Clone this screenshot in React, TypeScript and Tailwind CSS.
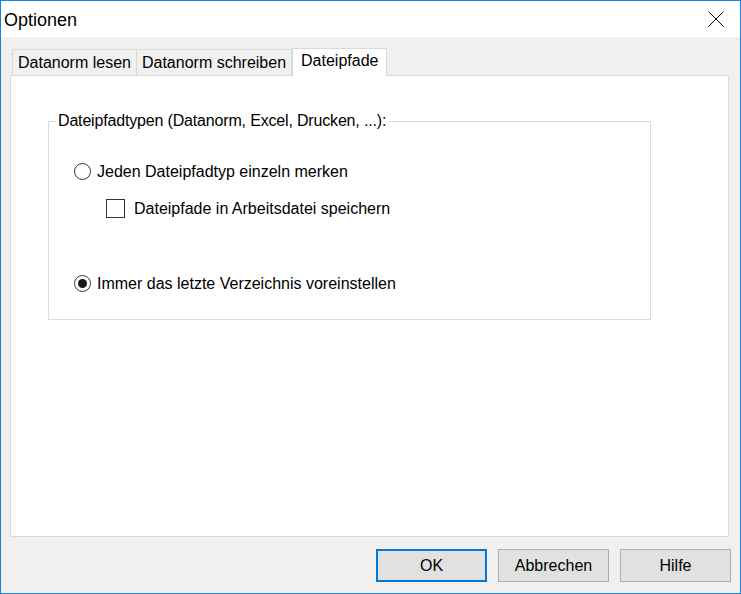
import React from "react";

function Radio({ checked }: { checked?: boolean }) {
  return (
    <span className="w-[17px] h-[17px] rounded-full border border-[#333333] bg-white flex items-center justify-center shrink-0">
      {checked && <span className="w-[9px] h-[9px] rounded-full bg-[#1a1a1a]" />}
    </span>
  );
}

export default function App() {
  return (
    <div
      className="w-[741px] h-[594px] border border-[#1883d7] flex flex-col bg-[#f0f0f0] text-[#000] overflow-hidden"
      style={{ fontFamily: '"Liberation Sans", Arial, sans-serif' }}
    >
      {/* Title bar */}
      <div className="h-[36px] bg-white flex items-center justify-between shrink-0">
        <span className="ml-[3px] text-[18px] leading-none pt-[1px]">Optionen</span>
        <div className="w-[46px] h-[36px] flex items-center justify-center mr-[1px]">
          <svg width="16" height="16" viewBox="0 0 16 16">
            <path d="M0.5 0.5 L15.5 15.5 M15.5 0.5 L0.5 15.5" stroke="#000" strokeWidth="1" />
          </svg>
        </div>
      </div>

      {/* Body */}
      <div className="flex-1 flex flex-col px-[9px] pt-[10px]">
        {/* Tabs */}
        <div className="flex items-end h-[28px] pl-[2px] relative z-10">
          <div className="h-[26px] px-[5px] bg-[#f0f0f0] border border-[#d9d9d9] border-b-0 flex items-center text-[16px]">
            Datanorm lesen
          </div>
          <div className="h-[26px] px-[5px] bg-[#f0f0f0] border border-[#d9d9d9] border-b-0 border-l-0 flex items-center text-[16px]">
            Datanorm schreiben
          </div>
          <div className="h-[28px] px-[8px] bg-white border border-[#d9d9d9] border-b-0 flex items-center text-[16px] -mb-[1px] pb-[3px]">
            Dateipfade
          </div>
        </div>

        {/* Panel */}
        <div className="h-[462px] mr-[2px] bg-white border border-[#d9d9d9] pl-[37px] pt-[45px]">
          <div className="relative w-[603px] h-[199px] border border-[#dcdcdc]">
            <span className="absolute -top-[10px] left-[7px] bg-white px-[2px] text-[16px] leading-[18px] tracking-[-0.17px] whitespace-nowrap">
              Dateipfadtypen (Datanorm, Excel, Drucken, ...):
            </span>
            <div className="flex flex-col pl-[25px] pt-[41px]">
              <div className="flex items-center h-[17px] gap-[6px] text-[16px]">
                <Radio />
                <span>Jeden Dateipfadtyp einzeln merken</span>
              </div>
              <div className="flex items-center h-[19px] mt-[19px] ml-[32px] gap-[9px] text-[16px]">
                <span className="w-[19px] h-[19px] border border-[#333333] bg-white shrink-0" />
                <span>Dateipfade in Arbeitsdatei speichern</span>
              </div>
              <div className="flex items-center h-[17px] mt-[57px] gap-[6px] text-[16px]">
                <Radio checked />
                <span>Immer das letzte Verzeichnis voreinstellen</span>
              </div>
            </div>
          </div>
        </div>

        {/* Buttons */}
        <div className="flex justify-end gap-[11px] mt-[12px]">
          <button className="w-[111px] h-[33px] bg-[#e1e1e1] border-2 border-[#0078d7] text-[16px]">OK</button>
          <button className="w-[111px] h-[33px] bg-[#e1e1e1] border border-[#adadad] text-[16px]">Abbrechen</button>
          <button className="w-[111px] h-[33px] bg-[#e1e1e1] border border-[#adadad] text-[16px]">Hilfe</button>
        </div>
      </div>
    </div>
  );
}
